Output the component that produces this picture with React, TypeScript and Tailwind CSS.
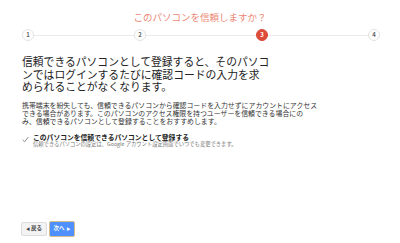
import React from 'react';

const steps = [1, 2, 3, 4];
const active = 3;
// 線の長さ（スクショに合わせて中央だけ少し長い）
const lines = ['w-[100px]', 'w-[110px]', 'w-[100px]'];

const StepDot: React.FC<{ n: number }> = ({ n }) => {
  const on = n === active;
  return (
    <div
      className={
        on
          ? 'w-[12px] h-[12px] shrink-0 rounded-full bg-[#dd4b39] border border-[#dd4b39] flex items-center justify-center text-[6px] font-bold text-white leading-none'
          : 'w-[12px] h-[12px] shrink-0 rounded-full bg-white border border-[#e3e3e3] flex items-center justify-center text-[6px] font-bold text-[#666] leading-none'
      }
    >
      {n}
    </div>
  );
};

export default function App() {
  return (
    <div
      className="w-[400px] h-[243px] bg-white flex flex-col overflow-hidden"
      style={{ fontFamily: '"Noto Sans CJK JP", "Liberation Sans", sans-serif' }}
    >
      {/* タイトル */}
      <div className="pt-[11px] text-center text-[9.5px] leading-[12px] text-[#ec8775]">
        このパソコンを信頼しますか？
      </div>

      {/* ステップ */}
      <div className="mt-[6px] pl-[22px] flex items-center">
        {steps.map((n, i) => (
          <React.Fragment key={n}>
            <StepDot n={n} />
            {i < lines.length && <div className={`${lines[i]} h-px bg-[#ebebeb]`} />}
          </React.Fragment>
        ))}
      </div>

      {/* 見出し */}
      <h1 className="mt-[14px] pl-[22px] text-[10.8px] leading-[12.7px] text-[#222] whitespace-nowrap">
        信頼できるパソコンとして登録すると、そのパソコ
        <br />
        ンではログインするたびに確認コードの入力を求
        <br />
        められることがなくなります。
      </h1>

      {/* 説明 */}
      <p className="mt-[9px] pl-[22px] text-[6.9px] leading-[7.8px] text-[#333] whitespace-nowrap">
        携帯端末を紛失しても、信頼できるパソコンから確認コードを入力せずにアカウントにアクセス
        <br />
        できる場合があります。このパソコンのアクセス権限を持つユーザーを信頼できる場合にの
        <br />
        み、信頼できるパソコンとして登録することをおすすめします。
      </p>

      {/* チェックボックス */}
      <div className="mt-[8px] pl-[22px] flex items-start gap-[4px]">
        <svg width="7" height="7" viewBox="0 0 10 10" className="mt-[2px] shrink-0">
          <path d="M1 5.5 L3.8 8.3 L9 1.5" fill="none" stroke="#8a8a8a" strokeWidth="1.4" />
        </svg>
        <div className="flex flex-col">
          <span className="text-[6.8px] leading-[7px] font-bold text-[#222] whitespace-nowrap">
            このパソコンを信頼できるパソコンとして登録する
          </span>
          <span className="text-[5.3px] leading-[6px] text-[#777] whitespace-nowrap">
            信頼できるパソコンの設定は、Google アカウント設定画面でいつでも変更できます。
          </span>
        </div>
      </div>

      {/* ボタン */}
      <div className="mt-auto mb-[6px] pl-[21px] flex items-center gap-[2px]">
        <button className="w-[26px] h-[14px] rounded-[2px] bg-[#f3f3f3] border border-[#dcdcdc] flex items-center justify-center gap-[1px] text-[5.5px] font-bold text-[#444] leading-none">
          <span className="text-[4px]">◀</span>
          戻る
        </button>
        <button className="w-[26px] h-[16px] rounded-[2px] bg-[#4d90fe] border-[1.5px] border-[#d9bd8c] flex items-center justify-center gap-[2px] text-[5.5px] font-bold text-white leading-none">
          次へ
          <span className="text-[4px]">▶</span>
        </button>
      </div>
    </div>
  );
}
